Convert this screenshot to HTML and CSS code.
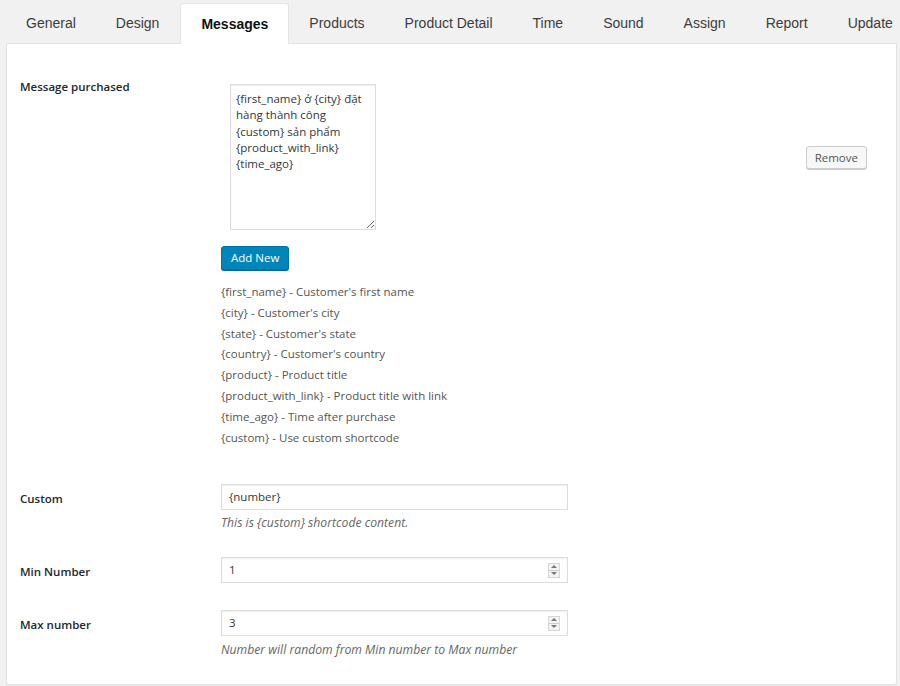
FILE: index.html
```html
<!DOCTYPE html>
<html lang="en">
<head>
<meta charset="utf-8">
<title>Messages settings</title>
<link rel="stylesheet" href="styles.css">
</head>
<body>
<div class="page">
  <nav class="tabs">
    <a class="tab">General</a>
    <a class="tab">Design</a>
    <a class="tab active">Messages</a>
    <a class="tab">Products</a>
    <a class="tab">Product Detail</a>
    <a class="tab">Time</a>
    <a class="tab">Sound</a>
    <a class="tab">Assign</a>
    <a class="tab">Report</a>
    <a class="tab">Update</a>
  </nav>
  <section class="panel">
    <div class="row row-message">
      <div class="label">Message purchased</div>
      <div class="field">
        <div class="message-item">
          <textarea class="message-text" wrap="off">{first_name} ở {city} đặt
hàng thành công
{custom} sản phẩm
{product_with_link}
{time_ago}</textarea>
          <button class="btn btn-secondary">Remove</button>
        </div>
        <button class="btn btn-primary">Add New</button>
        <ul class="shortcodes">
          <li>{first_name} - Customer's first name</li>
          <li>{city} - Customer's city</li>
          <li>{state} - Customer's state</li>
          <li>{country} - Customer's country</li>
          <li>{product} - Product title</li>
          <li>{product_with_link} - Product title with link</li>
          <li>{time_ago} - Time after purchase</li>
          <li>{custom} - Use custom shortcode</li>
        </ul>
      </div>
    </div>
    <div class="row row-custom">
      <div class="label label-input">Custom</div>
      <div class="field">
        <div class="input">{number}</div>
        <p class="description">This is {custom} shortcode content.</p>
      </div>
    </div>
    <div class="row row-min">
      <div class="label label-input">Min Number</div>
      <div class="field">
        <div class="input number"><span>1</span><span class="spin"><i class="up"></i><i class="down"></i></span></div>
      </div>
    </div>
    <div class="row row-max">
      <div class="label label-input">Max number</div>
      <div class="field">
        <div class="input number"><span>3</span><span class="spin"><i class="up"></i><i class="down"></i></span></div>
        <p class="description">Number will random from Min number to Max number</p>
      </div>
    </div>
  </section>
</div>
</body>
</html>
```
FILE: styles.css
```css
* { box-sizing: border-box; }
html, body { margin: 0; padding: 0; }
body {
  background: #f1f1f1;
  width: 900px;
  height: 686px;
  overflow: hidden;
  font-family: "Open Sans", "Noto Sans", sans-serif;
  font-size: 12px;
  color: #444;
}
.page { padding: 3px 0 0 6px; }
.tabs {
  display: flex;
  white-space: nowrap;
  height: 40px;
  position: relative;
  z-index: 2;
}
.tab {
  flex: none;
  padding: 1px 20px 0;
  line-height: 39px;
  font-family: "Liberation Sans", Arial, sans-serif;
  font-size: 14px;
  color: #3c3c3c;
}
.tab.active {
  background: #fff;
  border: 1px solid #e4e4e4;
  border-bottom: none;
  border-radius: 3px 3px 0 0;
  font-weight: bold;
  color: #111;
  height: 41px;
  line-height: 38px;
  margin: 0 0 0 1px;
}
.panel {
  width: 891px;
  height: 642px;
  background: #fff;
  border: 1px solid #e2e2e2;
  border-radius: 0 0 3px 3px;
  padding: 33px 29px 0 13px;
  box-shadow: 0 1px 1px rgba(0,0,0,.04);
}
.row { display: flex; }
.label {
  width: 201px;
  flex: none;
  font-weight: 600;
  color: #23282d;
  line-height: 18px;
  font-size: 11.5px;
  padding-top: 1px;
}
.label-input { padding-top: 6px; }
.field { flex: 1; }
.row-message .field { padding-top: 7px; }
.message-item { display: flex; align-items: flex-start; }
.message-text {
  display: block;
  margin: 0 0 0 9px;
  width: 146px;
  height: 146px;
  border: 1px solid #ddd;
  box-shadow: inset 0 1px 2px rgba(0,0,0,.07);
  padding: 6px 5px 5px;
  font-family: inherit;
  font-size: 11.5px;
  line-height: 16.3px;
  color: #32373c;
  overflow: hidden;
  resize: vertical;
}
.btn {
  font-family: inherit;
  font-size: 11.5px;
  border-radius: 3px;
  padding: 0 9px;
  cursor: pointer;
}
.btn-secondary {
  margin: 62px 0 0 auto;
  height: 23px;
  line-height: 21px;
  padding: 0 8px;
  background: #f7f7f7;
  border: 1px solid #ccc;
  box-shadow: 0 1px 0 #ccc;
  color: #555;
}
.btn-primary {
  display: block;
  margin-top: 16px;
  height: 24px;
  line-height: 22px;
  background: #0085ba;
  border: 1px solid #0073aa;
  box-shadow: 0 1px 0 #006799;
  color: #fff;
}
.shortcodes {
  list-style: none;
  margin: 12px 0 0;
  padding: 0;
  color: #555;
  line-height: 20.8px;
  font-size: 11.5px;
}
.row-custom { margin-top: 36px; }
.row-min { margin-top: 25px; }
.row-max { margin-top: 27px; }
.input {
  width: 347px;
  height: 26px;
  border: 1px solid #ddd;
  box-shadow: inset 0 1px 2px rgba(0,0,0,.07);
  padding: 0 7px;
  line-height: 24px;
  color: #32373c;
  font-size: 11.5px;
  display: flex;
  align-items: center;
}
.input.number { justify-content: space-between; }
.spin {
  width: 12px;
  height: 15px;
  border: 1px solid #d6d6d6;
  background: #f3f3f3;
  display: flex;
  flex-direction: column;
}
.spin i {
  flex: 1;
  display: flex;
  align-items: center;
  justify-content: center;
}
.spin .up { border-bottom: 1px solid #cfcfcf; }
.spin i::before {
  content: "";
  width: 0; height: 0;
  border-left: 3px solid transparent;
  border-right: 3px solid transparent;
}
.spin .up::before { border-bottom: 3px solid #777; }
.spin .down::before { border-top: 3px solid #777; }
.description {
  margin: 4px 0 0;
  line-height: 18px;
  font-style: italic;
  color: #666;
  font-size: 12.2px;
}
.row-max .description { margin-top: 5px; }
```
